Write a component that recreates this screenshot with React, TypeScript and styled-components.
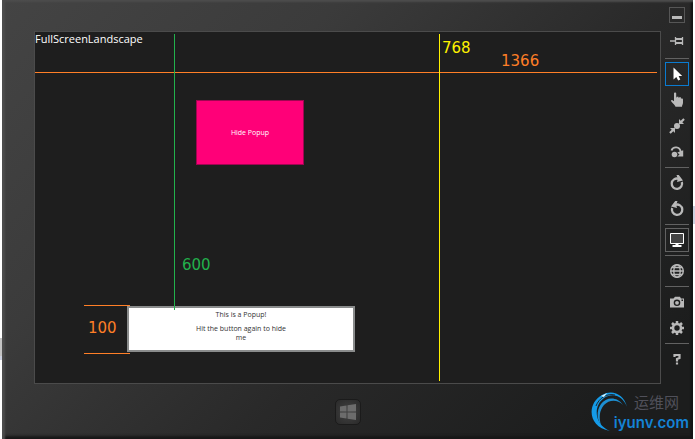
import React from 'react';
import styled, { createGlobalStyle } from 'styled-components';

const GlobalStyle = createGlobalStyle`
  * { box-sizing: border-box; }
  body { margin: 0; background: #fff; font-family: "Open Sans", "Noto Sans", sans-serif; }
  button { font: inherit; padding: 0; margin: 0; cursor: pointer; }
`;

const orange = '#ff7f27';
const green = '#22b14c';
const yellow = '#fff200';

const Desktop = styled.div`
  min-height: 100vh;
  display: flex;
  padding: 0 2px;
  background:
    linear-gradient(#fff 47%, #ccd0df 47%, #ccd0df 51%, #fff 51%) right / 2px 100% no-repeat,
    linear-gradient(#fff 77%, #c4c4c4 77%, #c4c4c4 81%, #ccd0df 81%, #ccd0df 82%, #fff 82%) left / 2px 100% no-repeat;
`;

const Device = styled.div`
  position: relative;
  flex: 1;
  display: flex;
  background: linear-gradient(135deg, #444 0%, #3b3b3b 30%, #292929 60%, #1c1d1d 90%);
  box-shadow: inset 3px 2px 2px #4d4d4d, inset 0 -3px 3px #171717, inset -2px 0 2px #141414;
`;

const Bezel = styled.main`
  flex: 1;
  min-width: 0;
  display: flex;
  flex-direction: column;
  padding: 31px 4px 0 32px;
`;

const Screen = styled.section`
  position: relative;
  flex: 1;
  border: 1px solid #4b4b4b;
  background: #1e1e1e;
  color: #fff;
`;

const Title = styled.h1`
  margin: 0;
  height: 68px;
  font-size: 11px;
  font-weight: 400;
  line-height: 14px;
`;

const PopupToggle = styled.button`
  display: block;
  width: 108px;
  height: 65px;
  margin-left: 161px;
  border: 1px solid #a10552;
  background: #ff0078;
  color: #fff;
  font-size: 7px;
  font-weight: 400;
`;

const Popup = styled.div`
  width: 228px;
  height: 46px;
  margin: 141px 0 0 92px;
  padding: 0 64px;
  border: 2px solid #8a8c8c;
  background: #fff;
  color: #333;
  font-size: 7px;
  line-height: 9px;
  text-align: center;
`;

const PopupText = styled.p`
  margin: 2px 0 5px;
`;

const VerticalRule = styled.div<{ $x: number; $color: string; $height: string }>`
  position: absolute;
  top: 2px;
  left: ${(p) => p.$x}px;
  width: 1px;
  height: ${(p) => p.$height};
  background: ${(p) => p.$color};
`;

const WidthRule = styled.div`
  position: absolute;
  top: 40px;
  left: 0;
  right: 3px;
  height: 1px;
  background: ${orange};
`;

const HeightBracket = styled.div`
  position: absolute;
  top: 273px;
  left: 49px;
  width: 46px;
  height: 49px;
  border: solid ${orange};
  border-width: 1px 0;
`;

const Measure = styled.span<{ $x: number; $y: number; $color: string }>`
  position: absolute;
  left: ${(p) => p.$x}px;
  top: ${(p) => p.$y}px;
  color: ${(p) => p.$color};
  font: 15px/18px "DejaVu Sans", sans-serif;
`;

const Footer = styled.footer`
  height: 55px;
  display: flex;
  justify-content: center;
  align-items: flex-start;
  padding-top: 15px;
`;

const StartButton = styled.button`
  width: 26px;
  height: 26px;
  display: grid;
  place-items: center;
  border: 1px solid #1b1b1b;
  border-radius: 5px;
  background: radial-gradient(#424242, #2a2a2a);
`;

const Toolbar = styled.nav`
  width: 28px;
  display: flex;
  flex-direction: column;
  align-items: flex-start;
  gap: 2px;
  padding-top: 7px;
`;

const ToolButton = styled.button<{ $border?: string; $tall?: boolean }>`
  width: 24px;
  height: ${(p) => (p.$tall ? 28 : 24)}px;
  display: grid;
  place-items: center;
  border: 1px solid ${(p) => p.$border ?? 'transparent'};
  background: none;
  color: #b9b9b9;
`;

const MinimizeButton = styled.button`
  width: 16px;
  height: 16px;
  margin: 0 0 2px 4px;
  display: grid;
  place-items: center;
  border: 1px solid #565656;
  background: none;
  color: #b9b9b9;
`;

const Divider = styled.hr`
  width: 24px;
  height: 1px;
  margin: 1px 0;
  border: 0;
  background: #626262;
`;

const Icon = styled.svg`
  display: block;
  overflow: visible;
`;

const Watermark = styled.div`
  position: absolute;
  right: 4px;
  bottom: 6px;
  width: 99px;
  height: 42px;
  display: flex;
  flex-direction: column;
  align-items: flex-end;
`;

const Swirl = styled.svg`
  position: absolute;
  left: 0;
  top: 0;
`;

const SiteName = styled.span`
  padding-right: 10px;
  color: #50505a;
  font: 15px/22px "Noto Sans CJK SC", sans-serif;
`;

const SiteUrl = styled.a`
  position: relative;
  color: #1483d5;
  font: 600 15px/20px Inter, sans-serif;
  text-decoration: none;
`;

type GlyphProps = { children: React.ReactNode };
const Glyph = ({ children }: GlyphProps) => (
  <Icon width="16" height="16" viewBox="0 0 16 16" fill="currentColor" aria-hidden="true">
    {children}
  </Icon>
);

const Pin = () => (
  <Glyph>
    <path d="M1 8h5M6.5 4v8M13.5 4v8" stroke="currentColor" strokeWidth="1.3" />
    <path d="M7 6h6M7 10h6" stroke="currentColor" strokeWidth="1.8" />
  </Glyph>
);
const Cursor = () => (
  <Glyph>
    <path d="M4.500 1.500v12l2.800-2.600L9.200 14.500l2.100-1-1.700-3.500h3.600z" fill="#fff" />
  </Glyph>
);
const Hand = () => (
  <Glyph>
    <path d="M5 1.500c0-1.300 2.200-1.300 2.200 0V5.500h.5V4.800h1.800v1h.6V5.200h1.800v1.200h.8c1 0 1.300.5 1.300 1.300v3c0 1.500-1 2.200-1 4H6.500C6 13 4 11.500 2.300 9.500 1.600 8.300 2.800 7.600 3.800 8.400L5 9.300z" />
  </Glyph>
);
const Pinch = () => (
  <Glyph>
    <circle cx="8" cy="8" r="3" />
    <path d="M10 6V1l1.700 1.700L14.300.2l1.500 1.500-2.500 2.600L15 6zM6 10v5l-1.700-1.700-2.600 2.500L.2 14.300l2.500-2.600L1 10z" />
  </Glyph>
);
const TouchRotate = () => (
  <Glyph>
    <circle cx="5.500" cy="10.500" r="2.800" />
    <path d="M2.500 6.500C4 2.300 10.800 2 11.800 8" fill="none" stroke="currentColor" strokeWidth="1.900" />
    <path d="M8.300 8.500l5.900-2.300v6.200H8.300l2.200-1.800z" />
  </Glyph>
);
const RotateRight = () => (
  <Glyph>
    <path d="M9.500 3.800A5.200 5.200 0 1 0 12.800 7" fill="none" stroke="currentColor" strokeWidth="2.300" />
    <path d="M7.500 0h2.300l4.200 5.500-6 1.500.8-3z" />
  </Glyph>
);
const RotateLeft = () => (
  <Glyph>
    <path d="M6.500 3.800A5.200 5.200 0 1 1 3.200 7" fill="none" stroke="currentColor" strokeWidth="2.300" />
    <path d="M8.500 0H6.200L2 5.500l6 1.500-.8-3z" />
  </Glyph>
);
const Monitor = () => (
  <Glyph>
    <path d="M1.500 1.500h13v10h-13z" fill="#444" stroke="#fff" />
    <path d="M6.500 12h3v1h3v2h-9v-2h3z" fill="#fff" />
  </Glyph>
);
const Globe = () => (
  <Glyph>
    <g fill="none" stroke="currentColor" strokeWidth="1.400">
      <circle cx="8" cy="8" r="6.300" />
      <ellipse cx="8" cy="8" rx="3.200" ry="6.300" />
      <path d="M2 8h12M3 4.500h10M3 11.500h10" />
    </g>
  </Glyph>
);
const Camera = () => (
  <Glyph>
    <path fillRule="evenodd" d="M1 4.500h3.500L6 2.800h5l1 1.700h3v9H1zM8 5.500a3.300 3.300 0 1 0 0 6.600 3.300 3.300 0 0 0 0-6.600zM12.500 5.500V7H14V5.500z" />
    <circle cx="8" cy="8.800" r="1.900" />
  </Glyph>
);
const Gear = () => (
  <Glyph>
    <circle cx="8" cy="8" r="4" fill="none" stroke="currentColor" strokeWidth="2.600" />
    <path d="M8 1v2.500M8 12.500V15M1 8h2.500M12.500 8H15M3 3l2 2M11 11l2 2M13 3l-2 2M5 11l-2 2" stroke="currentColor" strokeWidth="2.500" />
  </Glyph>
);
const Help = () => (
  <Glyph>
    <path d="M5.500 6V4h5v3L8 8v2.500" fill="none" stroke="currentColor" strokeWidth="2.200" />
    <path d="M6.900 11.500h2.200v2H6.900z" />
  </Glyph>
);

export default function App() {
  return (
    <>
      <GlobalStyle />
      <Desktop>
        <Device>
          <Bezel>
            <Screen>
              <Title>FullScreenLandscape</Title>
              <PopupToggle type="button">Hide Popup</PopupToggle>
              <Popup role="dialog" aria-label="Popup">
                <PopupText>This is a Popup!</PopupText>
                <PopupText>Hit the button again to hide me</PopupText>
              </Popup>
              <WidthRule />
              <VerticalRule $x={139} $color={green} $height="276px" />
              <VerticalRule $x={404} $color={yellow} $height="calc(100% - 4px)" />
              <HeightBracket />
              <Measure $x={407} $y={7} $color={yellow}>768</Measure>
              <Measure $x={466} $y={20} $color={orange}>1366</Measure>
              <Measure $x={147} $y={224} $color={green}>600</Measure>
              <Measure $x={53} $y={287} $color={orange}>100</Measure>
            </Screen>
            <Footer>
              <StartButton type="button" aria-label="Start">
                <Icon width="16" height="16" viewBox="0 0 16 16" fill="#6c6c6c" aria-hidden="true">
                  <path d="M0 2.500l6.500-1v6H0zM7.500 1.300L16 0v7.500H7.500zM0 8.500h6.500v6L0 13.500zM7.500 8.500H16V16l-8.500-1.300z" />
                </Icon>
              </StartButton>
            </Footer>
          </Bezel>
          <Toolbar aria-label="Simulator tools">
            <MinimizeButton type="button" aria-label="Minimize">
              <Icon width="10" height="10" viewBox="0 0 10 10" aria-hidden="true">
                <path d="M0 6h10v3H0z" fill="currentColor" />
              </Icon>
            </MinimizeButton>
            <ToolButton type="button" $tall aria-label="Always on top"><Pin /></ToolButton>
            <Divider />
            <ToolButton type="button" $border="#0a7bd0" aria-label="Mouse mode"><Cursor /></ToolButton>
            <ToolButton type="button" aria-label="Basic touch mode"><Hand /></ToolButton>
            <ToolButton type="button" aria-label="Pinch and zoom"><Pinch /></ToolButton>
            <ToolButton type="button" aria-label="Rotation touch mode"><TouchRotate /></ToolButton>
            <Divider />
            <ToolButton type="button" aria-label="Rotate clockwise"><RotateRight /></ToolButton>
            <ToolButton type="button" aria-label="Rotate counterclockwise"><RotateLeft /></ToolButton>
            <Divider />
            <ToolButton type="button" $border="#626262" aria-label="Change resolution"><Monitor /></ToolButton>
            <Divider />
            <ToolButton type="button" aria-label="Set location"><Globe /></ToolButton>
            <Divider />
            <ToolButton type="button" aria-label="Copy screenshot"><Camera /></ToolButton>
            <ToolButton type="button" aria-label="Screenshot settings"><Gear /></ToolButton>
            <Divider />
            <ToolButton type="button" aria-label="Help"><Help /></ToolButton>
          </Toolbar>
          <Watermark>
            <Swirl width="42" height="42" viewBox="0 0 42 42" aria-hidden="true">
              <path d="M37 16C34 3 22-2 12 4C-3 12-3 36 20 40C4 33 3 15 14 7C23 1 33 5 37 16z" fill="#159be8" />
              <path d="M33 14C27 5 16 6 11 13C6 20 7 29 11 34C9 27 9 20 14 14C19 9 27 8 33 14z" fill="#1d8fd2" />
              <path d="M6 15C9 7 17 2 25 4" fill="none" stroke="#1e2830" />
              <path d="M11 5l6-3-3 4z" fill="#d8f5ff" />
            </Swirl>
            <SiteName>运维网</SiteName>
            <SiteUrl href="#">iyunv.com</SiteUrl>
          </Watermark>
        </Device>
      </Desktop>
    </>
  );
}
